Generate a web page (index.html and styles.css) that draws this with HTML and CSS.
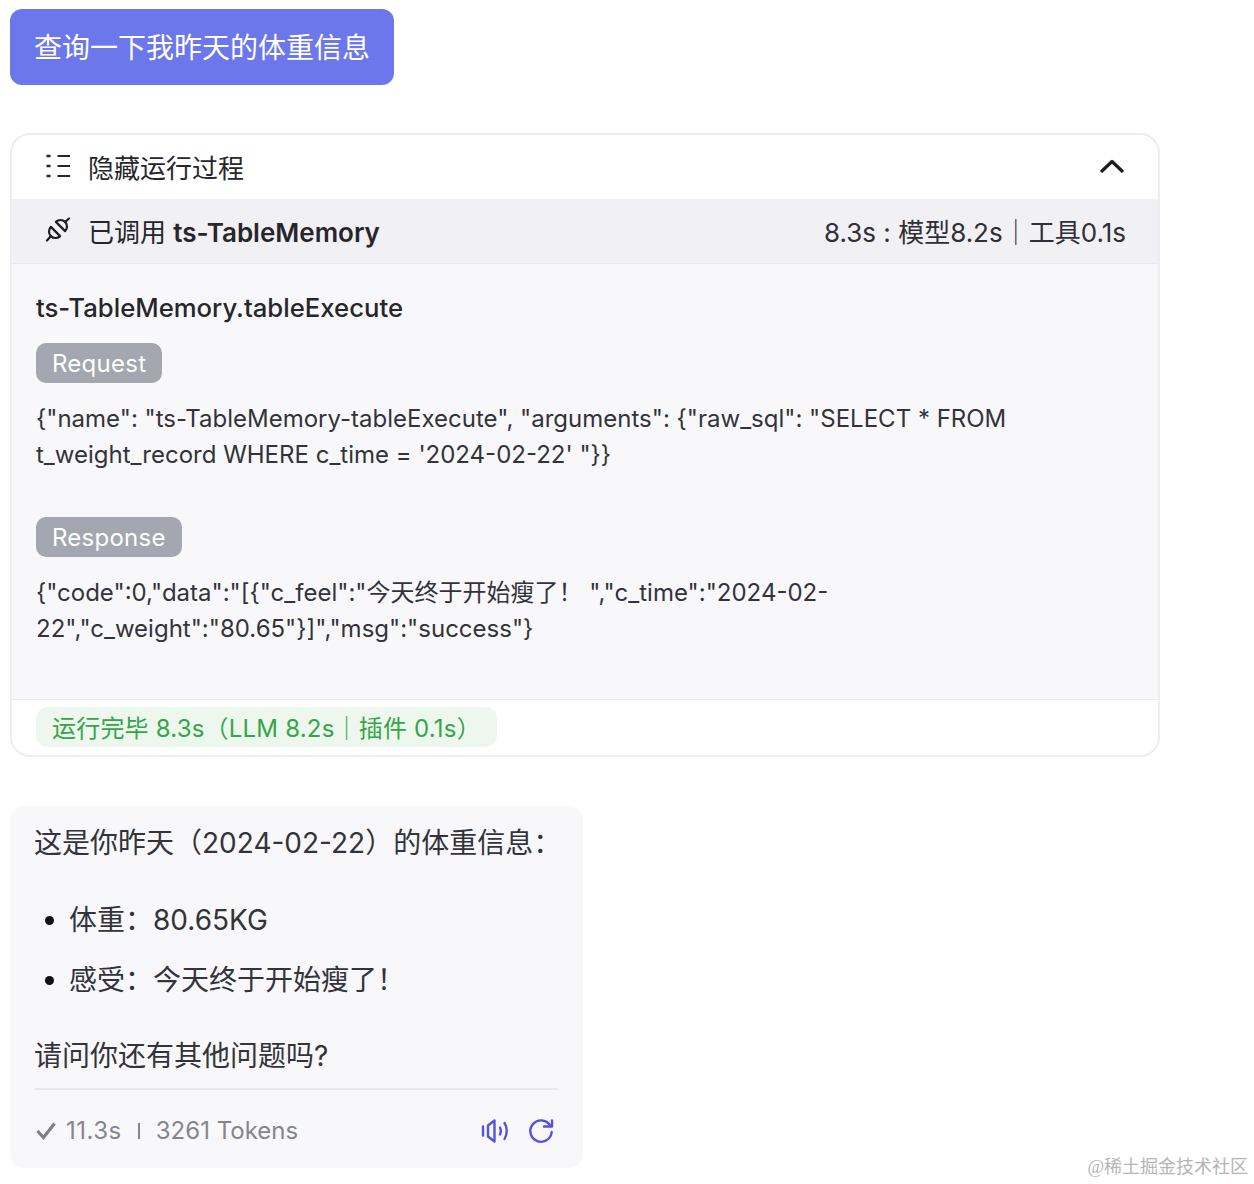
FILE: index.html
```html
<!DOCTYPE html>
<html lang="zh-CN">
<head>
<meta charset="utf-8">
<title>查询</title>
<link rel="stylesheet" href="styles.css">
</head>
<body>
<div class="page">
  <div class="user-msg">查询一下我昨天的体重信息</div>
  <section class="card">
    <header class="card-head">
      <div class="head-left">
        <svg class="ico" viewBox="0 0 26 26" fill="none" stroke="#26262b" stroke-width="2"><path d="M1.500 3h4M1.500 13h4M1.500 23h4" stroke-width="2.400"/><path d="M12.500 3h12.500M12.500 13h12.500M12.500 23h12.500"/></svg>
        <span>隐藏运行过程</span>
      </div>
      <svg class="chev" viewBox="0 0 24 14" fill="none" stroke="#1c1c20" stroke-width="3.200" stroke-linecap="round" stroke-linejoin="round"><path d="M2 12 12 2.500 22 12"/></svg>
    </header>
    <div class="tool-bar">
      <div class="head-left">
        <svg class="ico" viewBox="0 0 26 26" fill="none" stroke="#1f1f24" stroke-width="2.200" stroke-linecap="round" stroke-linejoin="round"><path d="M15.100 19.100 5.900 9.900A6.500 6.500 0 0 0 15.100 19.100z"/><path d="M20.100 14.100 10.900 4.900A6.500 6.500 0 0 1 20.100 14.100z"/><path d="M5.900 19.100 2 23.500M20.100 4.900 24 1.500"/></svg>
        <span>已调用 <b class="tool-name">ts-TableMemory</b></span>
      </div>
      <span class="timing">8.3s : 模型8.2s｜工具0.1s</span>
    </div>
    <div class="card-body">
      <div class="fn">ts-TableMemory.tableExecute</div>
      <span class="tag">Request</span>
      <p class="code">{"name": "ts-TableMemory-tableExecute", "arguments": {"raw_sql": "SELECT * FROM<br>t_weight_record WHERE c_time = '2024-02-22' "}}</p>
      <span class="tag tag-second">Response</span>
      <p class="code">{"code":0,"data":"[{"c_feel":"今天终于开始瘦了！ ","c_time":"2024-02-<br>22","c_weight":"80.65"}]","msg":"success"}</p>
    </div>
    <footer class="card-foot">
      <span class="done">运行完毕 8.3s（LLM 8.2s｜插件 0.1s）</span>
    </footer>
  </section>
  <section class="answer">
    <p class="a-line">这是你昨天（2024-02-22）的体重信息：</p>
    <ul class="a-list">
      <li>体重：80.65KG</li>
      <li>感受：今天终于开始瘦了！</li>
    </ul>
    <p class="a-line">请问你还有其他问题吗?</p>
    <div class="meta">
      <div class="stats">
        <svg class="check" viewBox="0 0 20 18" fill="none" stroke="#7e7f85" stroke-width="3.200"><path d="M1.500 9 7.500 15.500 18.500 1.500"/></svg>
        <span class="dur">11.3s</span><i class="sep"></i><span>3261 Tokens</span>
      </div>
      <div class="actions">
        <svg class="act" viewBox="0 0 28 28" fill="none" stroke="#5452e0" stroke-width="2.400" stroke-linecap="round" stroke-linejoin="round"><path d="M2 9.500v9M7 8.500v11l6.500 5V3.500z"/><path d="M19 10.500c1 2 1 5 0 7"/><path d="M23.500 6c3 4.500 3 11 0 16"/></svg>
        <svg class="act" viewBox="0 0 28 28" fill="none" stroke="#5452e0" stroke-width="2.400" stroke-linecap="round" stroke-linejoin="round"><path d="M23.400 8.900A10.700 10.700 0 1 0 24.700 15"/><path d="M25 3.500v6h-8"/></svg>
      </div>
    </div>
  </section>
</div>
<div class="mark">@稀土掘金技术社区</div>
</body>
</html>
```
FILE: styles.css
```css
* { box-sizing: border-box; }
html, body { margin: 0; padding: 0; background: #fff; }
body {
  width: 1254px;
  height: 1184px;
  overflow: hidden;
  position: relative;
  font-family: Inter, "Noto Sans CJK SC", sans-serif;
  font-optical-sizing: none;
  color: #26262b;
}
.page { padding: 9px 0 0 10px; display: flex; flex-direction: column; align-items: flex-start; }
.user-msg {
  width: 384px;
  height: 76px;
  display: flex;
  align-items: center;
  padding: 0 0 3px 24px;
  background: #6c77ec;
  color: #fff;
  border-radius: 12px;
  font-size: 28px;
}
.card {
  width: 1150px;
  height: 624px;
  margin-top: 48px;
  border: 2px solid #eeeef0;
  border-radius: 20px;
  overflow: hidden;
  display: flex;
  flex-direction: column;
  background: #fff;
}
.card-head, .tool-bar {
  height: 65px;
  flex: none;
  display: flex;
  align-items: center;
  justify-content: space-between;
  padding: 0 32px 1px 33px;
  font-size: 26px;
}
.card-head { height: 64px; padding-right: 34px; }
.tool-bar { background: #f1f1f5; border-bottom: 1px solid #e8e9ec; }
.head-left { display: flex; align-items: center; gap: 17px; }
.ico { width: 26px; height: 26px; flex: none; margin-bottom: 2px; }
.chev { width: 24px; height: 14px; margin-bottom: 2px; }
.tool-name { font-weight: 600; }
.timing { font-size: 26px; color: #2f2f35; }
.card-body {
  flex: 1;
  background: #f8f8fb;
  padding: 26px 24px 0;
  display: flex;
  flex-direction: column;
  align-items: flex-start;
}
.fn { font-size: 25.700px; font-weight: 450; line-height: 36px; }
.tag {
  height: 40px;
  margin-top: 17px;
  padding: 0 16px;
  border-radius: 10px;
  background: #a5a7b0;
  color: #fff;
  font-size: 24px;
  line-height: 41px;
  font-weight: 400;
  letter-spacing: .25px;
}
.tag-second { margin-top: 44px; }
.code { margin: 18px 0 0; font-size: 24px; line-height: 36px; color: #33333a; }
.card-foot { height: 56px; flex: none; border-top: 1px solid #e9eaed; padding: 7px 24px 0; display: flex; align-items: flex-start; }
.done {
  height: 40px;
  padding: 0 16px 2px;
  display: flex;
  align-items: center;
  border-radius: 12px;
  background: #edf7ee;
  color: #35a549;
  font-size: 24px;
  letter-spacing: .2px;
  white-space: nowrap;
}
.answer {
  width: 573px;
  height: 362px;
  margin-top: 49px;
  padding: 17px 25px 0;
  background: #f8f8fb;
  border-radius: 14px;
  font-size: 28px;
  color: #33333a;
}
.a-line { margin: 0 0 0 -1px; line-height: 40px; white-space: nowrap; }
.a-list { margin: 37px 0 36px; padding: 0 0 0 10px; line-height: 40px; list-style: none; }
.a-list li { margin-bottom: 20px; display: flex; align-items: center; }
.a-list li::before { content: ""; width: 9px; height: 9px; border-radius: 50%; background: #111; margin-right: 15px; flex: none; }
.a-list li:last-child { margin-bottom: 0; }
.meta {
  margin-top: 12px;
  border-top: 2px solid #e8e9ec;
  padding-top: 26px;
  display: flex;
  justify-content: space-between;
  align-items: center;
  font-size: 24px;
  color: #85868c;
}
.stats { display: flex; align-items: center; }
.check { width: 20px; height: 18px; margin: 0 10px 0 1px; }
.dur { letter-spacing: .5px; }
.sep { width: 2px; height: 16px; background: #85868c; margin: 0 16px; }
.actions { display: flex; gap: 18px; margin-right: 3px; }
.act { width: 28px; height: 28px; }
.mark {
  position: absolute;
  right: 6px;
  top: 1155px;
  font-family: "Liberation Serif", "Noto Sans CJK SC", serif;
  font-size: 18px;
  line-height: 24px;
  color: #b5b5b5;
}
```
